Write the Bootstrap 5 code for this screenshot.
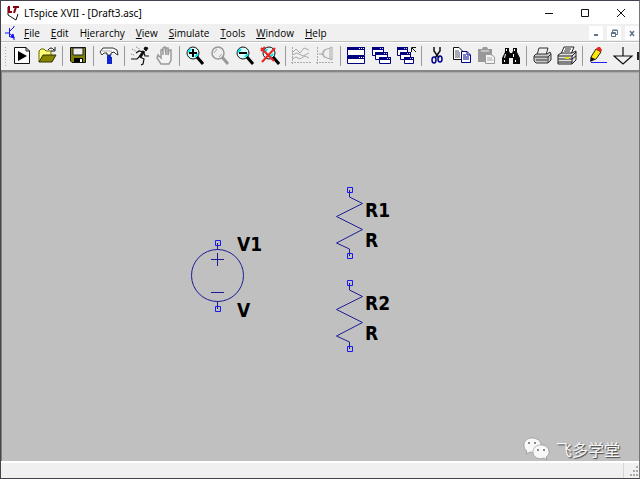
<!DOCTYPE html>
<html lang="en">
<head>
<meta charset="utf-8">
<meta name="viewport" content="width=device-width, initial-scale=1">
<title>LTspice XVII - [Draft3.asc]</title>
<link href="https://cdn.jsdelivr.net/npm/bootstrap@5.3.0/dist/css/bootstrap.min.css" rel="stylesheet">
<style>
body{font-family:"Open Sans","Noto Sans",sans-serif;font-size:10px;line-height:16px;color:#000;background:#f0f0f0}
.app-window{border:1px solid #45424d;border-right-color:#77757c}
.title-bar{height:23px;background:#fff;padding-left:5px}
.title-text{font-family:"Noto Sans",sans-serif;font-size:10px;padding-left:4px}
.plain-btn{border:0;background:none;padding:0;color:inherit;display:flex;align-items:center;justify-content:center}
.caption-btn{width:36px;height:23px}
.menu-bar{height:17px;padding-left:4px}
.menu-bar a{color:#000;text-decoration:none}
.menu-list{gap:11px;padding-left:5px}
.mdi-btn{width:14px;height:14px;background:#fff}
.tool-bar{height:29px;border-top:1px solid #bdbdbd;box-shadow:inset 0 1px #fff;padding-left:3px}
.grip{width:6px;height:20px}
.tool{flex:1 1 0;min-width:0;height:24px;overflow:visible}
.tool svg{flex:none}
.rule{width:6px;height:20px;display:flex;justify-content:center}
.rule::before{content:"";width:1px;background:#999}
.edge-tool{width:2px;height:8px;background:#222;margin-left:2px}
.sheet{background:#c0c0c0;border-top:2px solid #858585;border-left:1px solid #808080;box-shadow:inset 0 1px #aaa}
.sheet text{font:bold 19px "DejaVu Sans Condensed","Noto Sans",sans-serif}
.watermark{position:absolute;right:19px;bottom:0;color:#f8f8f8;font:16px/22px "Noto Sans CJK SC",sans-serif;text-shadow:1px 1px 1px #444;gap:6px}
.status-bar{height:17px;border-top:2px solid #fff}
.status-pane{border-right:1px solid #d4d4d4}
.corner{width:15px}
</style>
</head>
<body>
<div class="app-window vh-100 d-flex flex-column overflow-hidden">
<header class="title-bar d-flex align-items-center flex-shrink-0">
<svg width="14" height="17" viewBox="0 0 14 17" fill="none"><path d="M2 3V11L10 16L12 10" stroke="#111"/><path d="M3 2V8H6" stroke="#900010" stroke-width="2"/><path d="M7 3H13M10 3L8 9" stroke="#800010" stroke-width="2"/></svg>
<span class="title-text flex-grow-1">LTspice XVII - [Draft3.asc]</span>
<button class="plain-btn caption-btn" aria-label="Minimize"><svg width="10" height="10"><path d="M1 5.500H9" stroke="#111"/></svg></button>
<button class="plain-btn caption-btn" aria-label="Maximize"><svg width="10" height="10"><path d="M1.500 1.500H8.500V8.500H1.500Z" fill="none" stroke="#111"/></svg></button>
<button class="plain-btn caption-btn" aria-label="Close"><svg width="10" height="10"><path d="M1 1L9 9M9 1L1 9" stroke="#111"/></svg></button>
</header>
<nav class="menu-bar d-flex align-items-center flex-shrink-0" aria-label="Menu">
<svg width="14" height="14" viewBox="0 0 14 14" fill="none" stroke="#1515ee"><path d="M0 7H4M4.500 2V11M5 5L9 1M5 8L9 11M9 1V0M9 11V14"/><path d="M9 12L5.500 11L8 8Z" fill="#1515ee"/></svg>
<div class="menu-list d-flex flex-grow-1"><a href="#"><u>F</u>ile</a><a href="#"><u>E</u>dit</a><a href="#">H<u>i</u>erarchy</a><a href="#"><u>V</u>iew</a><a href="#"><u>S</u>imulate</a><a href="#"><u>T</u>ools</a><a href="#"><u>W</u>indow</a><a href="#"><u>H</u>elp</a></div>
<div class="d-flex flex-shrink-0 gap-1 pe-0">
<button class="plain-btn mdi-btn" aria-label="Minimize document"><svg width="10" height="10"><path d="M3 7H7" stroke="#60758a" stroke-width="2"/></svg></button>
<button class="plain-btn mdi-btn" aria-label="Restore document"><svg width="10" height="10" fill="none" stroke="#60758a"><path d="M3.500 4V2.500H8.500V6.500H7M3.500 2H8.500M2.500 4.500H6.500V8.500H2.500ZM2 5.500H7"/></svg></button>
<button class="plain-btn mdi-btn" aria-label="Close document"><svg width="10" height="10"><path d="M3 3L7 8M7 3L3 8" stroke="#60758a" stroke-width="1.500"/></svg></button>
</div>
</nav>
<div class="tool-bar d-flex align-items-center flex-shrink-0" role="toolbar" aria-label="Tools">
<svg class="grip flex-shrink-0" viewBox="0 0 6 20"><path d="M1.500 1V20" stroke="#aaa" stroke-dasharray="1 2"/></svg>
<button class="plain-btn tool" aria-label="Run"><svg width="20" height="20" viewBox="0 0 20 20"><path d="M2.500 1.500H14L17.500 5V17.500H2.500Z" fill="#fff" stroke="#111"/><path d="M14 1.500V5H17.500" fill="none" stroke="#111"/><path d="M6 5V15L15 10Z"/></svg></button>
<button class="plain-btn tool" aria-label="Open"><svg width="20" height="20" viewBox="0 0 20 20"><path d="M2 16V5L4 3H7L9 5H14V9" fill="#ffff75" stroke="#666600"/><path d="M2 16L6 9H19L15 16Z" fill="#858500" stroke="#333300"/><path d="M11 4Q14 0 17 4M18 1V5H14" fill="none" stroke="#111"/></svg></button>
<span class="rule"></span>
<button class="plain-btn tool" aria-label="Save"><svg width="20" height="20" viewBox="0 0 20 20"><path d="M2.500 1.500H17.500V16.500H4L2.500 15Z" fill="#808000" stroke="#111"/><path d="M5 2H15V9H5Z" fill="#eee" stroke="#222"/><path d="M6 12H15V16H6Z"/><path d="M12 13H14V16H12Z" fill="#fff"/></svg></button>
<span class="rule"></span>
<button class="plain-btn tool" aria-label="Control Panel"><svg width="20" height="20" viewBox="0 0 20 20"><path d="M1 6L4 2H14L18 4L19 9L17 8L15 6L12 7V9H8V7H5L3 9Z" fill="#fff" stroke="#333"/><path d="M3 5H13" stroke="#aaa"/><path d="M8 9H12V11H13V18H8V11H8Z" fill="#1028d0"/></svg></button>
<span class="rule"></span>
<button class="plain-btn tool" aria-label="Simulate"><svg width="20" height="20" viewBox="0 0 20 20" fill="none" stroke="#111"><path d="M15 1L18 2L16 5L14 3Z" fill="#111"/><path d="M14 5L10 11" stroke-width="3"/><path d="M14 6L9 5L6 7M14 7L15 10H19M10 10L7 13H1M10 11L14 13L13 18L11 19" stroke-width="1.200"/><path d="M2 3L6 5M6 1L10 3M1 8L4 9" stroke="#777" stroke-dasharray="1 1"/></svg></button>
<button class="plain-btn tool" aria-label="Halt" disabled><svg width="20" height="20" viewBox="0 0 20 20" fill="#f4f4f4" stroke="#9a9a9a"><path d="M6 18L2 12L3 9L6 12V4L8 3V9V2L10 1L11 9V2L13 2V9L14 4L16 4V14L14 18Z" stroke-width="1.500"/></svg></button>
<span class="rule"></span>
<button class="plain-btn tool" aria-label="Zoom In"><svg width="20" height="20" viewBox="0 0 20 20"><circle cx="8" cy="7" r="6" fill="#d9ffff" stroke="#111"/><path d="M3 6L6 3M10 11L13 8" stroke="#00e8e8" stroke-width="2"/><path d="M8 3V11M4 7H12" stroke="#000" stroke-width="2"/><path d="M12 11L18 18" stroke="#000" stroke-width="3"/></svg></button>
<button class="plain-btn tool" aria-label="Pan" disabled><svg width="20" height="20" viewBox="0 0 20 20"><circle cx="8" cy="7" r="6" fill="#eee" stroke="#999" stroke-width="1.500"/><path d="M4 7L7 3M9 11L12 8" stroke="#aaa"/><path d="M12 11L18 18" stroke="#999" stroke-width="3"/></svg></button>
<button class="plain-btn tool" aria-label="Zoom Back"><svg width="20" height="20" viewBox="0 0 20 20"><circle cx="8" cy="7" r="6" fill="#d9ffff" stroke="#111"/><path d="M3 6L6 3M10 11L13 8" stroke="#00e8e8" stroke-width="2"/><path d="M4 7H12" stroke="#000" stroke-width="2"/><path d="M12 11L18 18" stroke="#000" stroke-width="3"/></svg></button>
<button class="plain-btn tool" aria-label="Zoom Full Extents"><svg width="20" height="20" viewBox="0 0 20 20"><circle cx="9" cy="7" r="6" fill="#d9ffff" stroke="#111"/><path d="M5 6L7 3M10 11L13 8" stroke="#00e8e8" stroke-width="2"/><path d="M13 11L19 18" stroke="#000" stroke-width="3"/><path d="M1 2L14 15M15 2L2 16M1 5L5 1" stroke="#f02020" stroke-width="2"/></svg></button>
<span class="rule"></span>
<button class="plain-btn tool" aria-label="Autorange" disabled><svg width="20" height="20" viewBox="0 0 20 20" fill="none" stroke="#aaa"><path d="M1.500 1V18M0 16.500H20" stroke-dasharray="2 1"/><path d="M1 7L5 3L9 7L13 2L18 4M1 9L6 7L12 10L18 7M1 13L5 11L9 13L14 10L18 12"/></svg></button>
<button class="plain-btn tool" aria-label="Plot Settings" disabled><svg width="20" height="20" viewBox="0 0 20 20" fill="none" stroke="#aaa"><path d="M1.500 1V18M0 16.500H18" stroke-dasharray="2 1"/><path d="M3 8H6L8 4L14 2V13L8 11L6 8M14 2L16 1V14L14 13M9 4L7 8L9 11"/></svg></button>
<span class="rule"></span>
<button class="plain-btn tool" aria-label="Tile Windows"><svg width="20" height="20" viewBox="0 0 20 20"><path d="M1.500 1.500H18.500V9.500H1.500ZM1.500 10.500H18.500V17.500H1.500Z" fill="#fff" stroke="#000080"/><path d="M1 2.500H19M1 11.500H19" stroke="#000080" stroke-width="3"/><path d="M13 2.500H18M13 11.500H18" stroke="#fff" stroke-dasharray="1 1"/></svg></button>
<button class="plain-btn tool" aria-label="Cascade Windows"><svg width="20" height="20" viewBox="0 0 20 20"><g fill="#fff" stroke="#000080"><path d="M1.500 1.500H12.500V9.500H1.500Z"/><path d="M1 2.500H13" stroke-width="3"/><path d="M4.500 6.500H16.500V13.500H4.500Z"/><path d="M4 7.500H17" stroke-width="3"/><path d="M8.500 11.500H19.500V17.500H8.500Z"/><path d="M8 12.500H20" stroke-width="3"/></g><path d="M9 2.500H12M13 7.500H16M16 12.500H19" stroke="#c9c9f5" stroke-dasharray="1 1"/></svg></button>
<button class="plain-btn tool" aria-label="Close All Windows"><svg width="20" height="20" viewBox="0 0 20 20"><g fill="#fff" stroke="#000080"><path d="M1.500 1.500H11.500V9.500H1.500Z"/><path d="M1 2.500H12" stroke-width="3"/><path d="M4.500 6.500H14.500V13.500H4.500Z"/><path d="M4 7.500H15" stroke-width="3"/><path d="M8.500 11.500H17.500V17.500H8.500Z"/><path d="M8 12.500H18" stroke-width="3"/></g><path d="M8 2.500H11M11 7.500H14M14 12.500H17" stroke="#c9c9f5" stroke-dasharray="1 1"/><path d="M15.500 6V1.500H20M16 2L20 6" fill="none" stroke="#111"/></svg></button>
<span class="rule"></span>
<button class="plain-btn tool" aria-label="Cut"><svg width="20" height="20" viewBox="0 0 20 20" fill="none"><path d="M7 1V5L12 12M13 1V5L8 12" stroke="#111" stroke-width="1.500"/><ellipse cx="7" cy="14" rx="2" ry="3" stroke="#000090" stroke-width="1.500"/><ellipse cx="13" cy="13" rx="2" ry="3" stroke="#000090" stroke-width="1.500"/></svg></button>
<button class="plain-btn tool" aria-label="Copy"><svg width="20" height="20" viewBox="0 0 20 20" fill="#fff"><path d="M1.500 1.500H7L10.500 5V13.500H1.500Z" stroke="#111"/><path d="M3 5H7M3 7H8M3 9H8M3 11H8" stroke="#555"/><path d="M9.500 5.500H15L18.500 9V16.500H9.500Z" stroke="#000090"/><path d="M15 5.500V9H18.500M11 9H14M11 11H17M11 13H17" fill="none" stroke="#000090"/></svg></button>
<button class="plain-btn tool" aria-label="Paste" disabled><svg width="20" height="20" viewBox="0 0 20 20"><path d="M2 3H6L7 1H11L12 3H16V16H2Z" fill="#999"/><path d="M5 5H13" stroke="#eee"/><path d="M9.500 8.500H15L18.500 11V17.500H9.500Z" fill="#f4f4f4" stroke="#999"/><path d="M11 12H16M11 14H17" stroke="#aaa"/></svg></button>
<button class="plain-btn tool" aria-label="Find"><svg width="20" height="20" viewBox="0 0 20 20"><path d="M4 2H8V5L9 7H11L12 5V2H16V6L19 12V18H12V12H8V18H1V12L4 6Z" fill="#080808"/><path d="M5.500 3V5M13.500 3V5M4.500 8L3.500 12M12.500 8V11M3.500 14V16M14.500 14V16" stroke="#fff"/></svg></button>
<span class="rule"></span>
<button class="plain-btn tool" aria-label="Print"><svg width="20" height="20" viewBox="0 0 20 20" stroke="#333"><path d="M5 9L7 2H16L14 9Z" fill="#eee"/><path d="M2 10L4 8H15L18 6L19 8V14L16 17H4L2 15Z" fill="#c5c8c5"/><path d="M2 11H16V17M16 11L19 8M4 14H15" fill="none"/></svg></button>
<button class="plain-btn tool" aria-label="Print Setup"><svg width="20" height="20" viewBox="0 0 20 20" stroke="#222"><path d="M4 8L7 1H17L14 8Z" fill="#fff"/><path d="M8 3H14M7 5H13"/><path d="M1 9L4 7H15L19 5V14L15 18H1Z" fill="#e1e1e1"/><path d="M1 10H15V18M15 10L19 6M1 13H15L19 10M1 16H15" fill="none"/><path d="M8 12H12" stroke="#e5df00" stroke-width="2"/></svg></button>
<span class="rule"></span>
<button class="plain-btn tool" aria-label="Wire"><svg width="20" height="20" viewBox="0 0 20 20"><path d="M3 11L8 3L13 6L8 13L3 15Z" fill="#ffe900" stroke="#222"/><path d="M8 3L10 1H12L14 4L13 6Z" fill="#f02020"/><path d="M3 11L2 16L7 13Z" fill="#111"/><path d="M3 16.500H19" stroke="#2020ff"/></svg></button>
<button class="plain-btn tool" aria-label="Ground"><svg width="20" height="20" viewBox="0 0 20 20" fill="none" stroke="#111" stroke-width="1.200"><path d="M10 1V10M1 10H19L10 18Z"/></svg></button>
<span class="edge-tool flex-shrink-0"></span>
</div>
<main class="sheet flex-grow-1 position-relative overflow-hidden">
<svg class="d-block" width="637" height="388" viewBox="2 72 637 388" role="img" aria-label="Schematic">
<g fill="none" stroke="#1c1c96">
<circle cx="217.500" cy="275.500" r="26"/><path d="M217.500 243V250M217.500 301V309M211 259.500H224M217.500 253V266M211 292.500H224"/>
<path id="resistor" d="M349.500 190V197L362.500 203.500L336.500 216.500L362.500 229.500L336.500 243L349.500 249V256"/>
<use href="#resistor" y="93"/>
</g>
<g fill="none" stroke="#1818f0"><path d="M215.500 240.500h5v5h-5zM215.500 306.500h5v5h-5zM347.500 187.500h5v5h-5zM347.500 253.500h5v5h-5zM347.500 280.500h5v5h-5zM347.500 346.500h5v5h-5z"/></g>
<text x="237" y="251">V1</text><text x="237" y="317">V</text><text x="365" y="217">R1</text><text x="365" y="247">R</text><text x="365" y="310">R2</text><text x="365" y="340">R</text>
</svg>
<div class="watermark d-flex align-items-center"><svg width="27" height="24" viewBox="0 0 27 24"><g fill="#f8f8f8" stroke="#777" stroke-width=".500"><path d="M9 1C4 1 1 4 1 8C1 11 2 13 4 14L3 17L7 15C13 16 18 13 18 8C18 4 14 1 9 1Z"/><path d="M18 8C13 8 10 11 10 15C10 20 15 23 21 21L24 23L23 20C25 19 26 17 26 15C26 11 23 8 18 8Z"/></g><g fill="#666"><circle cx="6" cy="6" r="1"/><circle cx="12" cy="6" r="1"/><circle cx="15" cy="13" r="1"/><circle cx="21" cy="13" r="1"/></g></svg><span>飞多学堂</span></div>
</main>
<footer class="status-bar d-flex flex-shrink-0"><div class="status-pane flex-grow-1"></div><svg class="corner" viewBox="0 0 15 15" fill="#aaa"><path d="M12 3h2v2h-2zM9 7h2v2h-2zM12 7h2v2h-2zM6 11h2v2h-2zM9 11h2v2h-2zM12 11h2v2h-2z"/></svg></footer>
</div>
<script src="https://cdn.jsdelivr.net/npm/bootstrap@5.3.0/dist/js/bootstrap.bundle.min.js"></script>
</body>
</html>
